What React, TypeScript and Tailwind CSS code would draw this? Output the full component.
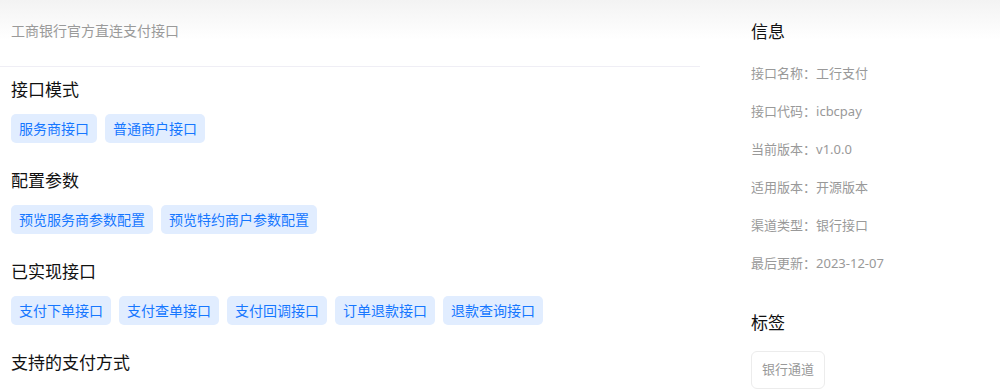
const modes = ['服务商接口', '普通商户接口']
const configs = ['预览服务商参数配置', '预览特约商户参数配置']
const apis = ['支付下单接口', '支付查单接口', '支付回调接口', '订单退款接口', '退款查询接口']

const info = [
  { label: '接口名称', value: '工行支付' },
  { label: '接口代码', value: 'icbcpay' },
  { label: '当前版本', value: 'v1.0.0' },
  { label: '适用版本', value: '开源版本' },
  { label: '渠道类型', value: '银行接口' },
  { label: '最后更新', value: '2023-12-07' },
]

function Section({ title, tags }: { title: string; tags?: string[] }) {
  return (
    <div className="mb-[26px]">
      <h3 className="text-[17px] leading-[24px] text-[#111]">{title}</h3>
      {tags && (
        <div className="flex flex-wrap gap-2 mt-3">
          {tags.map((t) => (
            <span
              key={t}
              className="h-[29px] px-2 flex items-center rounded-[5px] bg-[#e1edff] text-[#1677ff] text-[14px]"
            >
              {t}
            </span>
          ))}
        </div>
      )}
    </div>
  )
}

export default function App() {
  return (
    <div
      className="w-[1000px] h-[391px] overflow-hidden flex bg-[linear-gradient(to_bottom,#f3f3f3,#ffffff_40px)]"
      style={{ fontFamily: '"Noto Sans", "Noto Sans CJK SC", sans-serif' }}
    >
      {/* Main */}
      <div className="w-[700px] shrink-0">
        <div className="h-[67px] border-b border-[#efeef5] pl-[11px] pt-[21px]">
          <p className="text-[14px] leading-[20px] text-[#9a9a9a]">工商银行官方直连支付接口</p>
        </div>
        <div className="pl-[11px] pt-[11px]">
          <Section title="接口模式" tags={modes} />
          <Section title="配置参数" tags={configs} />
          <Section title="已实现接口" tags={apis} />
          <Section title="支持的支付方式" />
        </div>
      </div>

      {/* Sidebar */}
      <div className="flex-1 pl-[51px] pt-5">
        <h3 className="text-[17px] leading-[24px] text-[#111]">信息</h3>
        <div className="mt-[11px]">
          {info.map(({ label, value }) => (
            <div key={label} className="h-[38px] flex items-center text-[13px] text-[#999]">
              {label}：{value}
            </div>
          ))}
        </div>
        <h3 className="mt-[28px] text-[17px] leading-[24px] text-[#111]">标签</h3>
        <div className="mt-4 flex">
          <span className="h-[38px] px-[10px] flex items-center border border-[#ececec] rounded-[6px] text-[13px] text-[#999]">
            银行通道
          </span>
        </div>
      </div>
    </div>
  )
}
